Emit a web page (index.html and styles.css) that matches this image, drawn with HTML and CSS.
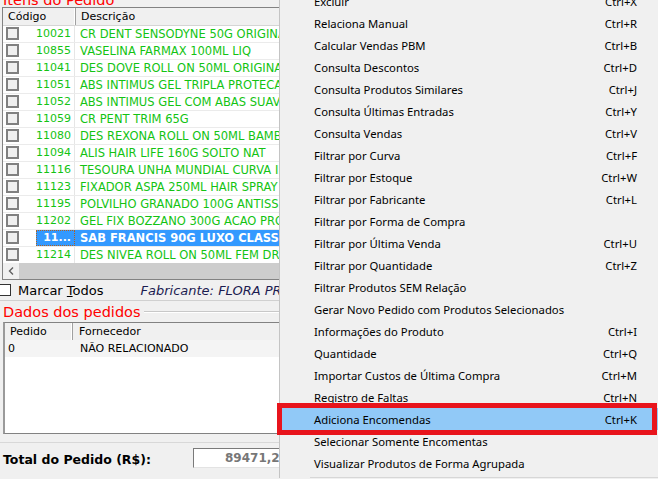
FILE: index.html
```html
<!DOCTYPE html>
<html lang="pt-BR">
<head>
    <meta charset="UTF-8">
    <title>Itens do Pedido</title>
    <link rel="stylesheet" href="styles.css">
</head>
<body>
    <div class="screen">
        <div class="form">
            <div class="legend top">Itens do Pedido</div>

            <div class="grid items">
                <div class="grid-head">
                    <div class="hcell c-code">Código</div>
                    <div class="hcell c-desc">Descrição</div>
                </div>
                <div class="rows">
                    <div class="row"><span class="c-chk"><i class="box"></i></span><span class="c-code">10021</span><span class="c-desc">CR DENT SENSODYNE 50G ORIGINAL</span></div>
                    <div class="row"><span class="c-chk"><i class="box"></i></span><span class="c-code">10855</span><span class="c-desc">VASELINA FARMAX 100ML LIQ</span></div>
                    <div class="row"><span class="c-chk"><i class="box"></i></span><span class="c-code">11041</span><span class="c-desc">DES DOVE ROLL ON 50ML ORIGINAL</span></div>
                    <div class="row"><span class="c-chk"><i class="box"></i></span><span class="c-code">11051</span><span class="c-desc">ABS INTIMUS GEL TRIPLA PROTECAO</span></div>
                    <div class="row"><span class="c-chk"><i class="box"></i></span><span class="c-code">11052</span><span class="c-desc">ABS INTIMUS GEL COM ABAS SUAVE</span></div>
                    <div class="row"><span class="c-chk"><i class="box"></i></span><span class="c-code">11059</span><span class="c-desc">CR PENT TRIM 65G</span></div>
                    <div class="row"><span class="c-chk"><i class="box"></i></span><span class="c-code">11080</span><span class="c-desc">DES REXONA ROLL ON 50ML BAMBOO</span></div>
                    <div class="row"><span class="c-chk"><i class="box"></i></span><span class="c-code">11094</span><span class="c-desc">ALIS HAIR LIFE 160G SOLTO NAT</span></div>
                    <div class="row"><span class="c-chk"><i class="box"></i></span><span class="c-code">11116</span><span class="c-desc">TESOURA UNHA MUNDIAL CURVA INOX</span></div>
                    <div class="row"><span class="c-chk"><i class="box"></i></span><span class="c-code">11123</span><span class="c-desc">FIXADOR ASPA 250ML HAIR SPRAY</span></div>
                    <div class="row"><span class="c-chk"><i class="box"></i></span><span class="c-code">11195</span><span class="c-desc">POLVILHO GRANADO 100G ANTISSEPTICO</span></div>
                    <div class="row"><span class="c-chk"><i class="box"></i></span><span class="c-code">11202</span><span class="c-desc">GEL FIX BOZZANO 300G ACAO PROLONGADA</span></div>
                    <div class="row selected"><span class="c-chk"><i class="box"></i></span><span class="c-code">11...</span><span class="c-desc">SAB FRANCIS 90G LUXO CLASSICO</span></div>
                    <div class="row"><span class="c-chk"><i class="box"></i></span><span class="c-code">11214</span><span class="c-desc">DES NIVEA ROLL ON 50ML FEM DRY</span></div>
                </div>
                <div class="hscroll">
                    <span class="sb-btn">
                        <svg width="6" height="8" viewBox="0 0 6 8"><path d="M5 0.5 L1.5 4 L5 7.5" fill="none" stroke="#606060" stroke-width="1.4"/></svg>
                    </span>
                    <span class="sb-thumb"></span>
                </div>
            </div>

            <div class="options">
                <label class="mark-all"><i class="tick"></i><span>Marcar <u>T</u>odos</span></label>
                <span class="maker">Fabricante: FLORA PRODUTOS</span>
            </div>

            <div class="group-title">
                <span class="legend">Dados dos pedidos</span>
                <span class="rule"></span>
            </div>

            <div class="grid orders">
                <div class="grid-head">
                    <div class="hcell o-ped">Pedido</div>
                    <div class="hcell o-forn">Fornecedor</div>
                </div>
                <div class="orow">
                    <span class="o-ped">0</span>
                    <span class="o-forn">NÃO RELACIONADO</span>
                </div>
            </div>

            <div class="total">
                <span class="total-label">Total do Pedido (R$):</span>
                <span class="total-value">89471,25</span>
            </div>
        </div>

        <ul class="menu">
            <li><span>Excluir</span><kbd>Ctrl+X</kbd></li>
            <li><span>Relaciona Manual</span><kbd>Ctrl+R</kbd></li>
            <li><span>Calcular Vendas PBM</span><kbd>Ctrl+B</kbd></li>
            <li><span>Consulta Descontos</span><kbd>Ctrl+D</kbd></li>
            <li><span>Consulta Produtos Similares</span><kbd>Ctrl+J</kbd></li>
            <li><span>Consulta Últimas Entradas</span><kbd>Ctrl+Y</kbd></li>
            <li><span>Consulta Vendas</span><kbd>Ctrl+V</kbd></li>
            <li><span>Filtrar por Curva</span><kbd>Ctrl+F</kbd></li>
            <li><span>Filtrar por Estoque</span><kbd>Ctrl+W</kbd></li>
            <li><span>Filtrar por Fabricante</span><kbd>Ctrl+L</kbd></li>
            <li><span>Filtrar por Forma de Compra</span></li>
            <li><span>Filtrar por Última Venda</span><kbd>Ctrl+U</kbd></li>
            <li><span>Filtrar por Quantidade</span><kbd>Ctrl+Z</kbd></li>
            <li><span>Filtrar Produtos SEM Relação</span></li>
            <li><span>Gerar Novo Pedido com Produtos Selecionados</span></li>
            <li><span>Informações do Produto</span><kbd>Ctrl+I</kbd></li>
            <li><span>Quantidade</span><kbd>Ctrl+Q</kbd></li>
            <li><span>Importar Custos de Última Compra</span><kbd>Ctrl+M</kbd></li>
            <li><span>Registro de Faltas</span><kbd>Ctrl+N</kbd></li>
            <li class="hover"><span>Adiciona Encomendas</span><kbd>Ctrl+K</kbd></li>
            <li><span>Selecionar Somente Encomentas</span></li>
            <li><span>Visualizar Produtos de Forma Agrupada</span></li>
            <li class="sep"></li>
        </ul>

        <div class="callout"></div>
    </div>
</body>
</html>
```

FILE: styles.css
```css
body {
    margin: 0;
    background: #f0f0f0;
    font-family: 'DejaVu Sans', sans-serif;
}

.screen {
    position: relative;
    width: 658px;
    height: 479px;
    overflow: hidden;
}

.form {
    display: flex;
    flex-direction: column;
    width: 658px;
}

/* Group captions */
.legend {
    color: #ff0000;
    font-size: 14.5px;
    line-height: 16px;
    white-space: nowrap;
}

.legend.top {
    height: 15px;
    margin-top: -8px;
    padding-left: 3px;
}

.group-title {
    display: flex;
    align-items: center;
    height: 20px;
    padding-left: 3px;
    padding-top: 1px;
}

.group-title .rule {
    flex: 1;
    margin-left: 3px;
    border-top: 1px solid #c8c8c8;
    border-bottom: 1px solid #ffffff;
}

/* Grids */
.grid {
    background: #fff;
    border: 1px solid #828282;
}

.grid-head {
    display: flex;
    background: #f0f0f0;
    font-size: 11px;
    color: #000;
}

.hcell {
    box-sizing: border-box;
    padding-left: 5px;
    border-right: 1px solid #a0a0a0;
    box-shadow: inset -1px 0 0 #fff;
    white-space: nowrap;
}

.items {
    margin-left: 2px;
}

.items .grid-head {
    height: 18px;
    line-height: 17px;
    border-bottom: 1px solid #d5d5d5;
    box-sizing: border-box;
}

.items .hcell.c-code { width: 73px; }
.items .hcell.c-desc { flex: 1; border-right: none; }

.rows {
    height: 237px;
    overflow: hidden;
}

.row {
    display: flex;
    height: 16px;
    line-height: 16px;
    border-bottom: 1px solid #ebebeb;
    font-size: 11.5px;
    color: #13c313;
    white-space: nowrap;
}

.row .c-chk {
    width: 33px;
    padding-left: 3px;
    box-sizing: border-box;
}

.box {
    display: block;
    width: 13px;
    height: 13px;
    margin-top: 1px;
    box-sizing: border-box;
    border: 2px solid #808080;
    background: #efefef;
}

.row .c-code {
    width: 39px;
    box-sizing: border-box;
    padding-right: 3px;
    text-align: right;
    border-right: 1px solid #e6e6e6;
    font-size: 11px;
}

.row .c-desc {
    flex: 1;
    padding-left: 5px;
    overflow: hidden;
}

.row.selected .c-code,
.row.selected .c-desc {
    background: #3399ff;
    color: #fff;
    font-weight: bold;
    border-right-color: #3399ff;
}

.row.selected .c-code {
    outline: 1px dotted #b06020;
    outline-offset: -1px;
}

.hscroll {
    display: flex;
    height: 16px;
    background: #cdcdcd;
}

.sb-btn {
    display: flex;
    align-items: center;
    justify-content: center;
    width: 16px;
    background: #f0f0f0;
}

.sb-thumb {
    flex: 1;
    background: #cdcdcd;
}

/* Check all / manufacturer */
.options {
    display: flex;
    align-items: center;
    height: 20px;
    border-bottom: 1px solid #d0d0d0;
    font-size: 13px;
    white-space: nowrap;
}

.mark-all {
    display: flex;
    align-items: center;
    color: #000;
}

.tick {
    display: block;
    width: 11px;
    height: 12px;
    margin-right: 7px;
    box-sizing: border-box;
    border: 1px solid #333;
    border-left: none;
    background: #fff;
}

.maker {
    margin-left: 37px;
    font-style: italic;
    color: #1c1c50;
}

/* Orders grid */
.orders {
    margin-left: 3px;
    height: 110px;
    border-left: 2px solid #9a9a9a;
}

.orders .grid-head {
    height: 17px;
    line-height: 17px;
}

.orders .hcell.o-ped { width: 68px; padding-left: 5px; }
.orders .hcell.o-forn { flex: 1; border-right: none; padding-left: 6px; }

.orow {
    display: flex;
    height: 17px;
    line-height: 17px;
    background: #f4f4f4;
    font-size: 11px;
    white-space: nowrap;
}

.orow .o-ped {
    width: 68px;
    padding-left: 3px;
    box-sizing: border-box;
}

.orow .o-forn {
    padding-left: 7px;
}

/* Footer total */
.total {
    display: flex;
    align-items: center;
    margin-top: 8px;
    padding: 5px 0 0 3px;
    border-top: 1px solid #d8d8d8;
}

.total-label {
    width: 190px;
    font-size: 12.5px;
    font-weight: bold;
    color: #000;
    padding-top: 3px;
}

.total-value {
    width: 104px;
    height: 20px;
    line-height: 19px;
    box-sizing: border-box;
    padding-right: 8px;
    text-align: right;
    background: #fff;
    border: 1px solid #7a7a7a;
    border-right-color: #e3e3e3;
    border-bottom-color: #e3e3e3;
    font-size: 12px;
    font-weight: bold;
    color: #777;
}

/* Context menu */
.menu {
    position: absolute;
    left: 279px;
    top: -10px;
    width: 379px;
    margin: 0;
    padding: 0;
    list-style: none;
    background: #f0f0f0;
    border-left: 1px solid #c4c4c4;
    box-sizing: border-box;
    font-family: 'Noto Sans', sans-serif;
    font-size: 11.3px;
    color: #000;
}

.menu li {
    display: flex;
    justify-content: space-between;
    align-items: center;
    height: 22px;
    padding: 0 21px 0 34px;
    white-space: nowrap;
}

.menu kbd {
    font-family: inherit;
}

.menu li.hover {
    background: #91c9f7;
}

.menu li.sep {
    height: 0;
    margin: 3px 0 0 30px;
    padding: 0;
    border-top: 1px solid #d7d7d7;
}

.callout {
    position: absolute;
    left: 277px;
    top: 403px;
    width: 380px;
    height: 32px;
    box-sizing: border-box;
    border: 5px solid #e8141c;
}
```
